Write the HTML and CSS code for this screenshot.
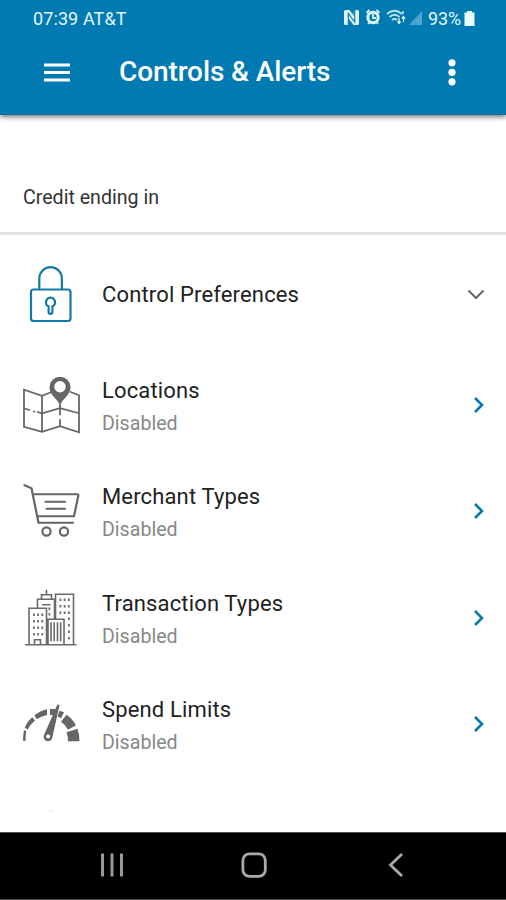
FILE: index.html
```html
<!DOCTYPE html>
<html lang="en">
<head>
<meta charset="utf-8">
<title>Controls &amp; Alerts</title>
<link rel="stylesheet" href="styles.css">
</head>
<body>
<div class="screen">
  <header class="top">
    <div class="status">
      <span class="clock">07:39 AT&amp;T</span>
      <svg class="status-icons" viewBox="342 8 82 20" fill="none">
        <path d="M344 11.500q0-1.500 1.500-1.500h4l6 8v-8h2q1.500 0 1.500 1.500v12q0 1.500-1.500 1.500h-4l-6-8v8h-2q-1.500 0-1.500-1.500z" fill="#dff5fc"/>
        <path d="M346.500 24.500V12l9 11V11" stroke="#dff5fc" stroke-width="3.500" stroke-linejoin="round"/>
        <path d="M348.300 24V13.500l6.400 8.500V11" stroke="#007ab1" stroke-width="1.100"/>
        <circle cx="373" cy="17.500" r="5.200" fill="#007ab1" stroke="#dff5fc" stroke-width="3"/>
        <path d="M373 14v4h3M366.500 13l3-3M379.500 13l-3-3M368 24l1.500-2M378 24l-1.500-2" stroke="#dff5fc" stroke-width="1.800"/>
        <path d="M387 14q7.500-6.500 15 0M389.500 17q5-4.500 10 0M392 20q2.500-2 5 0" stroke="#b7e3f2" stroke-width="1.700"/>
        <path d="M399 18v5M397.500 21.500l1.500 2 1.500-2M403.500 22v-5M402 18.500l1.500-2 1.500 2M403 11v3" stroke="#dff5fc" stroke-width="1.300"/>
        <path d="M409 25 422 11v14z" fill="#4ba5cc"/>
      </svg>
      <span class="percent">93%</span>
      <svg class="battery" viewBox="0 0 11 15"><path d="M3 0h5v1.500h2.500V15H.5V1.500H3z" fill="#e9fbff"/></svg>
    </div>
    <div class="appbar">
      <svg class="menu" viewBox="0 0 26 20"><path d="M0 3h26M0 10.500h26M0 18h26" stroke="#fff" stroke-width="3"/></svg>
      <h1 class="title">Controls &amp; Alerts</h1>
      <svg class="more" viewBox="0 0 8 28" fill="#fff"><circle cx="4" cy="4.800" r="3.600"/><circle cx="4" cy="14.300" r="3.600"/><circle cx="4" cy="23.800" r="3.600"/></svg>
    </div>
  </header>
  <section class="account"><span class="account-text">Credit ending in</span></section>
  <main class="list">
    <div class="row row-head">
      <svg class="icon" viewBox="20 261.500 62 64" fill="none" stroke="#127aa8" stroke-width="2.200">
        <path d="M39.300 290v-11a11.300 11.300 0 0 1 22.600 0v11"/>
        <rect x="31" y="290" width="39.500" height="31.500" rx="2.500"/>
        <path d="M48.600 307a4.600 4.600 0 1 1 3.800 0v5.500a1.900 1.900 0 0 1-3.800 0z"/>
      </svg>
      <div class="label"><span class="name">Control Preferences</span></div>
      <svg class="down" viewBox="0 0 18 12" fill="none"><path d="M1.500 1.500 9 9l7.500-7.500" stroke="#666" stroke-width="2"/></svg>
    </div>
    <div class="row">
      <svg class="icon" viewBox="20 372.750 62 64" fill="none" stroke="#666" stroke-width="1.800">
        <path d="M51 392 42 395.500 24 389.500V426.500L42 431.500 60 426 79 432V395L70 391.500M42 395.500v36M60 404v11M60 419v7"/>
        <path d="M24 408l6 2M33 411l2 .6M37 411.500l5 1.500 18-5 19 5"/>
        <path d="M60 405.500c-2-7-10.500-10-10.500-18.500a10.500 10.500 0 0 1 21 0c0 8.500-8.500 11.500-10.500 18.500z" fill="#666" stroke="none"/>
        <circle cx="60" cy="386.500" r="5.700" fill="#fff" stroke="none"/>
      </svg>
      <div class="label"><span class="name">Locations</span><span class="state">Disabled</span></div>
      <svg class="go" viewBox="0 0 12 18" fill="none"><path d="M2 2l7 7-7 7" stroke="#087aa8" stroke-width="2.600"/></svg>
    </div>
    <div class="row">
      <svg class="icon" viewBox="20 479.250 62 64" fill="none" stroke="#666" stroke-width="2.200" stroke-linecap="round" stroke-linejoin="round">
        <path d="M24.500 485.500 31.500 488.500 38.500 523H73M33.500 494.500H77.500Q78.500 494.500 78.300 496L74 516.500H37.500M45.500 502H65M46.500 509H65"/>
        <circle cx="46.500" cy="531.700" r="4.100"/><circle cx="64" cy="531.700" r="4.100"/>
      </svg>
      <div class="label"><span class="name">Merchant Types</span><span class="state">Disabled</span></div>
      <svg class="go" viewBox="0 0 12 18" fill="none"><path d="M2 2l7 7-7 7" stroke="#087aa8" stroke-width="2.600"/></svg>
    </div>
    <div class="row">
      <svg class="icon" viewBox="20 585.750 62 64" fill="none" stroke="#6a6a6a" stroke-width="1.600">
        <path d="M25 644.500H76.500M29 644V608H46.500V644M37.500 608V599H54.500V619M41.500 599V594.500H51.500V599M46.500 594V589.500M55.500 619V594H73.500V644M48 644V619H64V644M34.500 644V639.500H40.500V644"/>
        <path d="M51 622V641M54.200 622V641M57.500 622V641M60.700 622V641M42 604.500H50.500"/>
        <path d="M33 614.500H44M33 621H44M33 627.500H44M33 634H44" stroke-width="2.600" stroke-dasharray="1.800 2.400"/>
        <path d="M59.500 599.500H70M59.500 606H70M59.500 612.500H70M68 618.500H70M68 625H70M68 631.500H70M68 638H70M48.500 608.500H51M48.500 614H51" stroke-width="2.600" stroke-dasharray="1.800 2.400"/>
      </svg>
      <div class="label"><span class="name">Transaction Types</span><span class="state">Disabled</span></div>
      <svg class="go" viewBox="0 0 12 18" fill="none"><path d="M2 2l7 7-7 7" stroke="#087aa8" stroke-width="2.600"/></svg>
    </div>
    <div class="row">
      <svg class="icon" viewBox="20 692.250 62 64" fill="#666">
        <path d="M23 741q0-6 1-10.500l2.300.8q-1 4.500-.6 9.700zM24.800 728q2.500-6.500 7.500-10.500l2.700 3.200q-4.800 4-7.300 9zM34.500 715.500q5.500-4.500 12.500-6v5.800q-6 1.200-10.300 4.200zM50 709.200l5.500 0-1.500 6-4 0zM59.500 711l4.500 1.500-3 6-3.500-2zM66.500 715q6 4 9.500 10.500l-8 4.500q-2.500-5-7-8zM77.500 729q2 6 2 12.500H68q0-5-1.500-9z"/>
        <path d="M57.300 705q1.300-.8 2.200.5L52.400 737.500a4.400 4.400 0 1 1-8.400-2.200z"/>
        <circle cx="48.100" cy="736.800" r="2" fill="#fff"/>
      </svg>
      <div class="label"><span class="name">Spend Limits</span><span class="state">Disabled</span></div>
      <svg class="go" viewBox="0 0 12 18" fill="none"><path d="M2 2l7 7-7 7" stroke="#087aa8" stroke-width="2.600"/></svg>
    </div>
    <div class="speck"></div>
  </main>
  <nav class="nav">
    <svg class="nav-icon" viewBox="0 0 28 28" fill="none" stroke="#999" stroke-width="3"><path d="M4.500 2.500v23M14 2.500v23M23.500 2.500v23"/></svg>
    <svg class="nav-icon" viewBox="0 0 28 28" fill="none" stroke="#aaa" stroke-width="2.800"><rect x="2.900" y="2.900" width="22.400" height="22.400" rx="6.500"/></svg>
    <svg class="nav-icon" viewBox="0 0 28 28" fill="none" stroke="#aaa" stroke-width="2.800"><path d="M20 3 8.500 14l11.500 11"/></svg>
  </nav>
</div>
</body>
</html>
```
FILE: styles.css
```css
* { box-sizing: border-box; }
body { margin: 0; background: #fff; font-family: Roboto, "Liberation Sans", sans-serif; }
svg { display: block; flex: none; }
.screen { width: 506px; height: 900px; display: flex; flex-direction: column; overflow: hidden; }
.top { height: 115px; flex: none; background: #007ab1; border-bottom: 1px solid #126f98; box-shadow: 0 2px 5px rgba(0,0,0,.55); }
.status { height: 36px; display: flex; align-items: center; padding: 0 30px 0 33px; color: #e2f7fd; font-size: 18px; white-space: nowrap; }
.clock { flex: 1; letter-spacing: .1px; }
.status-icons { width: 82px; height: 20px; margin-left: -1px; }
.percent { width: 37px; margin-left: 4px; letter-spacing: -.1px; }
.battery { width: 11px; height: 15px; margin-right: 1px; margin-left: -1px; }
.appbar { height: 72px; display: flex; align-items: center; padding: 0 50px 0 44px; }
.menu { width: 26px; height: 20px; }
.title { flex: 1; margin: -2px 0 0 49px; font-size: 28px; font-weight: 500; letter-spacing: -.1px; color: #fff; white-space: nowrap; }
.more { width: 8px; height: 28px; }
.account { height: 120px; flex: none; padding: 71px 23px 0; border-bottom: 3px solid #e0e0e0; line-height: 24px; font-size: 19.6px; color: #333; }
.list { flex: 1; }
.row { height: 106.5px; display: flex; align-items: center; padding: 0 21px 0 20px; }
.row-head { height: 116.5px; }
.icon { width: 62px; height: 64px; }
.label { flex: 1; margin-left: 20px; padding-top: 4px; display: flex; flex-direction: column; align-items: flex-start; gap: 4px; white-space: nowrap; }
.name { font-size: 22px; line-height: 30px; letter-spacing: .15px; color: #222; }
.state { font-size: 19.6px; line-height: 28px; color: #888; }
.down { width: 18px; height: 12px; margin-top: 3px; }
.go { width: 12px; height: 18px; }
.speck { width: 4px; height: 2px; margin: 32px 0 0 49px; background: #edf2f2; }
.nav { height: 68px; flex: none; display: flex; justify-content: space-between; align-items: center; padding: 0 96px 3px 98px; background: #000; border-top: 1px solid #555; border-bottom: 1px solid #444; }
.nav-icon { width: 28px; height: 28px; }
```
